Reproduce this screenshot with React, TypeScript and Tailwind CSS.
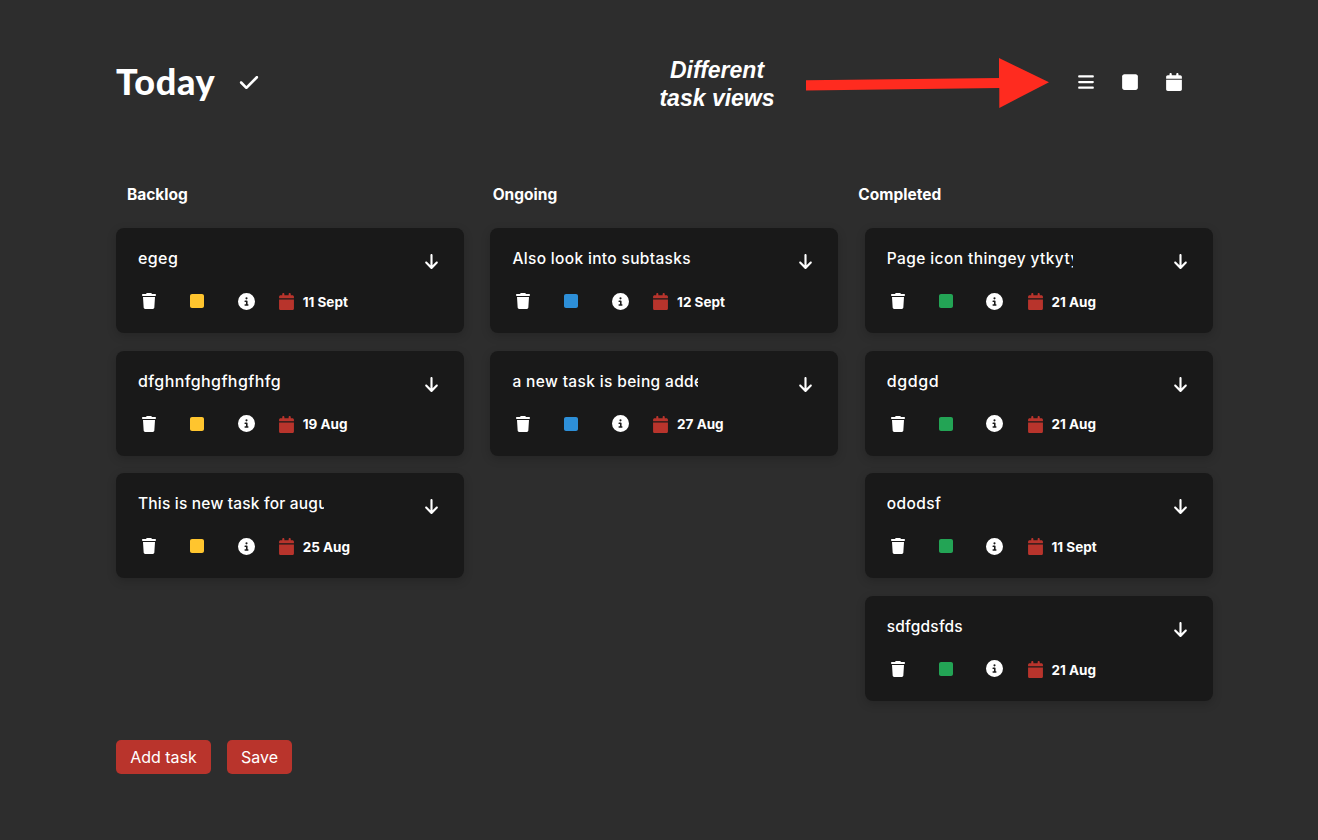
import { FaArrowDown, FaBars, FaCalendar, FaCheck, FaCircleInfo, FaSquare, FaTrash } from "react-icons/fa6";

type Task = { title: string; date: string; type: string };
type Column = { name: string; color: string; tasks: Task[] };

const columns: Column[] = [
  {
    name: "Backlog",
    color: "text-[#ffc52e]",
    tasks: [
      { title: "egeg", date: "11 Sept", type: "text-[16px] leading-[20px] tracking-[0.4px]" },
      { title: "dfghnfghgfhgfhfg", date: "19 Aug", type: "text-[16px] leading-[20px] tracking-[0.4px]" },
      { title: "This is new task for august", date: "25 Aug", type: "leading-[22px] tracking-[0.2px]" },
    ],
  },
  {
    name: "Ongoing",
    color: "text-[#2d8fd8]",
    tasks: [
      { title: "Also look into subtasks", date: "12 Sept", type: "leading-[22px] tracking-[0.34px]" },
      { title: "a new task is being added", date: "27 Aug", type: "leading-[21px] tracking-[0.36px]" },
    ],
  },
  {
    name: "Completed",
    color: "text-[#23a455]",
    tasks: [
      { title: "Page icon thingey ytkyty", date: "21 Aug", type: "leading-[22px] tracking-[0.4px]" },
      { title: "dgdgd", date: "21 Aug", type: "text-[16px] leading-[20px] tracking-[0.6px]" },
      { title: "ododsf", date: "11 Sept", type: "leading-[22px] tracking-[0.4px]" },
      { title: "sdfgdsfds", date: "21 Aug", type: "leading-[21px] tracking-[0.2px]" },
    ],
  },
];

function TaskCard({ task, color }: { task: Task; color: string }) {
  return (
    <article className="h-[105px] rounded-lg bg-[#191919] pl-[22px] pr-[25px] text-[15.5px] shadow-[0_3px_10px_rgba(0,0,0,0.18)]">
      <div className="flex justify-between pt-5">
        <h3 className={`h-[22px] w-[186px] overflow-hidden whitespace-nowrap font-medium ${task.type}`}>
          {task.title}
        </h3>
        <FaArrowDown className="mt-[5px] h-[17px] w-[15px]" />
      </div>
      <div className="mt-[19px] flex h-[24px] items-center">
        <FaTrash className="ml-1 h-4 w-[14px]" />
        <FaSquare className={`ml-[34px] h-4 w-[14px] ${color}`} />
        <FaCircleInfo className="ml-[33.5px] h-[17px] w-[17px]" />
        <FaCalendar className="ml-[24.4px] mt-px h-[17px] w-[15px] text-[#b8342c]" />
        <span className="ml-[8.8px] mt-[2px] text-[13.5px] font-bold">{task.date}</span>
      </div>
    </article>
  );
}

export default function App() {
  return (
    <main className="flex h-[840px] w-[1318px] flex-col bg-[#2d2d2d] pl-[116px] pr-[105px] font-['Inter',sans-serif] text-white">
      <header className="flex h-[165px] items-center">
        <h1 className="w-[99px] whitespace-nowrap pb-[4px] font-['Lato',sans-serif] text-[36px] font-black leading-none tracking-[0.7px]">
          Today
        </h1>
        <FaCheck className="ml-6 h-[21px] w-[20px]" />
        <p className="ml-[396px] w-[124px] pt-[2px] text-center font-['Liberation_Sans',sans-serif] text-[23px] font-bold italic leading-[28px]">
          Different task&nbsp;views
        </p>
        <svg className="ml-[27px] h-[50px] w-[243px]" viewBox="0 0 243 50" fill="#ff2b1f">
          <path d="M0 22.3 193 20V0l50 24.3L193.3 50V30L0 32.4z" />
        </svg>
        <nav className="ml-[29px] flex items-center pb-px">
          <FaBars className="h-[18px] w-4" />
          <FaSquare className="ml-7 h-[18px] w-4" />
          <FaCalendar className="ml-7 h-[18px] w-4" />
        </nav>
      </header>
      <section className="grid grid-cols-3 pt-[18px]">
        {columns.map((c) => (
          <h2 key={c.name} className="pl-[11px] text-[15.5px] font-bold leading-6">
            {c.name}
          </h2>
        ))}
      </section>
      <section className="mt-[21px] grid h-[512px] grid-cols-[348px_348px_348px] content-start gap-x-[26.4px]">
        {columns.map((c) => (
          <div key={c.name} className="flex flex-col gap-[17.6px]">
            {c.tasks.map((t) => (
              <TaskCard key={t.title} task={t} color={c.color} />
            ))}
          </div>
        ))}
      </section>
      <footer className="flex gap-4">
        <button className="h-[34px] w-[95px] rounded-[5px] bg-[#b9342c] text-[16px]">Add task</button>
        <button className="h-[34px] w-[65px] rounded-[5px] bg-[#b9342c] text-[16px]">Save</button>
      </footer>
    </main>
  );
}
